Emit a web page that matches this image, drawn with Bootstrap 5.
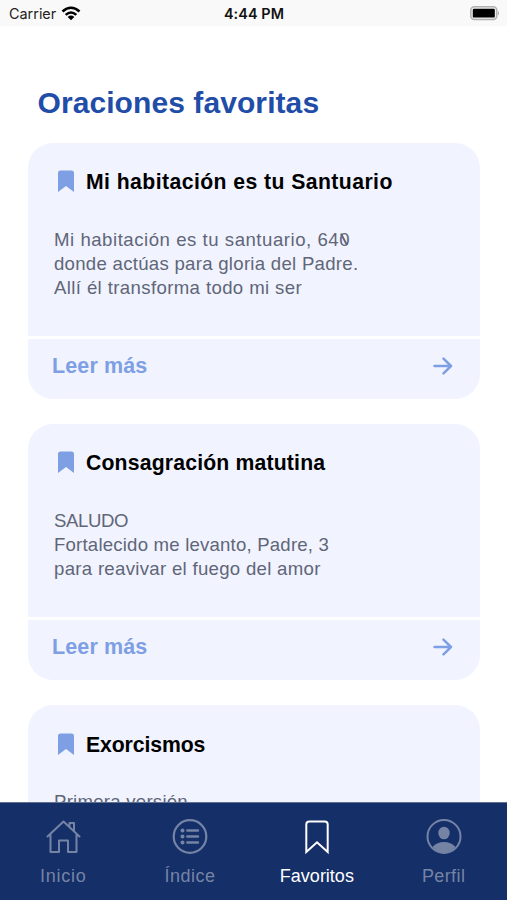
<!DOCTYPE html>
<html lang="es">
<head>
<meta charset="utf-8">
<meta name="viewport" content="width=device-width, initial-scale=1">
<title>Oraciones favoritas</title>
<link href="https://cdn.jsdelivr.net/npm/bootstrap@5.3.0/dist/css/bootstrap.min.css" rel="stylesheet">
<style>
body{font-family:"Liberation Sans",Arial,sans-serif;background:#fff}
.screen{height:900px;overflow:hidden}
.status{height:26px;background:#f9f9f9;font-family:Inter,sans-serif;font-size:14.4px;line-height:26px;color:#222;padding:1px 7px 0 9px;flex:none}
.status .clock{font-weight:600;color:#111;letter-spacing:.1px;margin-left:-1px}
.status .side{flex:1 1 0}
.wifi{margin-left:5px}
.page-title{font-size:30px;font-weight:700;line-height:36px;color:#1f4da8;margin:59px 0 0 37.5px;padding-bottom:21.5px;letter-spacing:.08px}
.content{min-height:0;overflow:hidden}
.prayers{padding:0 27px 0 28px;gap:25px}
.prayer{border-radius:25px;overflow:hidden;flex:none;height:256.3px}
.prayer-main{background:#f1f3ff;height:193.6px;padding:26.500px 25px 0 26px}
.prayer-foot{background:#f1f3ff;flex:1;margin-top:3px;padding:0 27px 6.500px 24px;color:#7e9fe4;font-size:21.5px;font-weight:700;letter-spacing:.12px}
.prayer h2{font-size:21.2px;font-weight:700;line-height:26px;color:#000;margin:0 0 0 12px}
.flag{margin-left:4px;margin-top:1px;flex:none}
.excerpt{font-size:18.6px;line-height:24.3px;color:#5f6678;margin-top:32.5px}
.excerpt div,h1,h2{white-space:nowrap}
.t1{letter-spacing:.43px}.t2{letter-spacing:.18px}.t3{letter-spacing:-.08px}
.e1{letter-spacing:.53px}.e2{letter-spacing:.28px}.e3{letter-spacing:.38px}
.e4{letter-spacing:-.4px}.e5{letter-spacing:.2px}.e6{letter-spacing:.3px}.e7{letter-spacing:.25px}
.n1{letter-spacing:.75px}.n2{letter-spacing:.5px}.n4{letter-spacing:.4px}
.zero{position:relative}
.zero::after{content:"";position:absolute;left:4px;top:4.5px;width:1.5px;height:13px;background:currentColor;transform:rotate(-28deg)}
.tabs{height:98px;background:#152f68;border-top:1px solid #60718f;flex:none;color:#7584a5;font-size:18px}
.tabs a{color:inherit;text-decoration:none;flex:1 1 0;padding-top:16px;line-height:24px}
.tabs a.current{color:#fff}
.tabs svg{margin-bottom:9px}
</style>
<script src="https://cdn.jsdelivr.net/npm/bootstrap@5.3.0/dist/js/bootstrap.bundle.min.js"></script>
</head>
<body>
<div class="screen d-flex flex-column">
  <header class="status d-flex align-items-center">
    <div class="side d-flex align-items-center"><span>Carrier</span>
      <svg class="wifi" width="20" height="15" viewBox="0 0 20 15"><g fill="none" stroke="#000" stroke-width="2.6"><path d="M1.500 5.500Q10-2 18.500 5.500"/><path d="M4.700 8.900Q10 4.100 15.300 8.900"/></g><path d="M6.700 10.900Q10 8.200 13.300 10.900L10 14.200Z"/></svg>
    </div>
    <span class="clock">4:44 PM</span>
    <div class="side d-flex justify-content-end">
      <svg width="30" height="15" viewBox="0 0 30 15"><rect x=".8" y=".8" width="26" height="12.800" rx="3.500" fill="#eee" stroke="#b1b1b1" stroke-width="1.500"/><rect x="2.800" y="2.800" width="22" height="8.800" rx="1.200"/><path d="M28 5q2 2.200 0 4.400z" fill="#aaa"/></svg>
    </div>
  </header>
  <main class="content flex-grow-1">
    <h1 class="page-title">Oraciones favoritas</h1>
    <div class="prayers d-flex flex-column">
      <article class="prayer d-flex flex-column">
        <div class="prayer-main">
          <div class="d-flex"><svg class="flag" width="16" height="23" viewBox="0 0 16 23"><path d="M0 22V3Q0 .5 2.500.5H13.500Q16 .5 16 3V22L8 16Z" fill="#7e9fe4"/></svg><h2 class="t1">Mi habitación es tu Santuario</h2></div>
          <div class="excerpt"><div class="e1">Mi habitación es tu santuario, 64<span class="zero">0</span></div><div class="e2">donde actúas para gloria del Padre.</div><div class="e3">Allí él transforma todo mi ser</div></div>
        </div>
        <div class="prayer-foot d-flex align-items-center justify-content-between"><span>Leer más</span><svg width="20" height="18" viewBox="0 0 20 18" fill="none" stroke="#7e9fe4" stroke-width="2.500" stroke-linecap="round" stroke-linejoin="round"><path d="M1.500 9H18M10.500 1.700 18 9 10.500 16.300"/></svg></div>
      </article>
      <article class="prayer d-flex flex-column">
        <div class="prayer-main">
          <div class="d-flex"><svg class="flag" width="16" height="23" viewBox="0 0 16 23"><path d="M0 22V3Q0 .5 2.500.5H13.500Q16 .5 16 3V22L8 16Z" fill="#7e9fe4"/></svg><h2 class="t2">Consagración matutina</h2></div>
          <div class="excerpt"><div class="e4">SALUDO</div><div class="e5">Fortalecido me levanto, Padre, 3</div><div class="e6">para reavivar el fuego del amor</div></div>
        </div>
        <div class="prayer-foot d-flex align-items-center justify-content-between"><span>Leer más</span><svg width="20" height="18" viewBox="0 0 20 18" fill="none" stroke="#7e9fe4" stroke-width="2.500" stroke-linecap="round" stroke-linejoin="round"><path d="M1.500 9H18M10.500 1.700 18 9 10.500 16.300"/></svg></div>
      </article>
      <article class="prayer d-flex flex-column">
        <div class="prayer-main">
          <div class="d-flex"><svg class="flag" width="16" height="23" viewBox="0 0 16 23"><path d="M0 22V3Q0 .5 2.500.5H13.500Q16 .5 16 3V22L8 16Z" fill="#7e9fe4"/></svg><h2 class="t3">Exorcismos</h2></div>
          <div class="excerpt"><div class="e7">Primera versión</div></div>
        </div>
      </article>
    </div>
  </main>
  <nav class="tabs d-flex">
    <a href="#" class="d-flex flex-column align-items-center"><svg width="36" height="36" viewBox="-.5 0 36 36" fill="none" stroke="currentColor" stroke-width="2" stroke-linejoin="round" stroke-linecap="round"><path d="M2 17.500 18 2.500 34 17.500M5 15V33H13.500V21.500H22.500V33H31V15M24 8V4H28.500V12"/></svg><span class="n1">Inicio</span></a>
    <a href="#" class="d-flex flex-column align-items-center"><svg width="36" height="36" viewBox="0 .5 36 36" fill="none" stroke="currentColor"><circle cx="18" cy="18" r="16.300" stroke-width="2.200"/><path d="M15.300 12H26M15.300 18H26M15.300 24H26" stroke-width="2.400" stroke-linecap="round"/><g fill="currentColor" stroke="none"><circle cx="10.500" cy="12" r="2"/><circle cx="10.500" cy="18" r="2"/><circle cx="10.500" cy="24" r="2"/></g></svg><span class="n2">Índice</span></a>
    <a href="#" class="current d-flex flex-column align-items-center"><svg width="36" height="36" viewBox="0 0 36 36" fill="none" stroke="currentColor" stroke-width="2"><path d="M7.300 33V5.500Q7.300 2.500 10.300 2.500H25.700Q28.700 2.500 28.700 5.500V33L18 23.300Z"/></svg><span class="n3">Favoritos</span></a>
    <a href="#" class="d-flex flex-column align-items-center"><svg width="36" height="36" viewBox="0 .5 36 36"><circle cx="18" cy="18" r="16.500" fill="none" stroke="currentColor" stroke-width="2"/><ellipse cx="18" cy="14.500" rx="5.700" ry="6.300" fill="currentColor"/><path d="M6.500 28.500Q11 23.500 18 23.500T29.500 28.500Q25 34 18 34T6.500 28.500Z" fill="currentColor"/></svg><span class="n4">Perfil</span></a>
  </nav>
</div>
</body>
</html>
